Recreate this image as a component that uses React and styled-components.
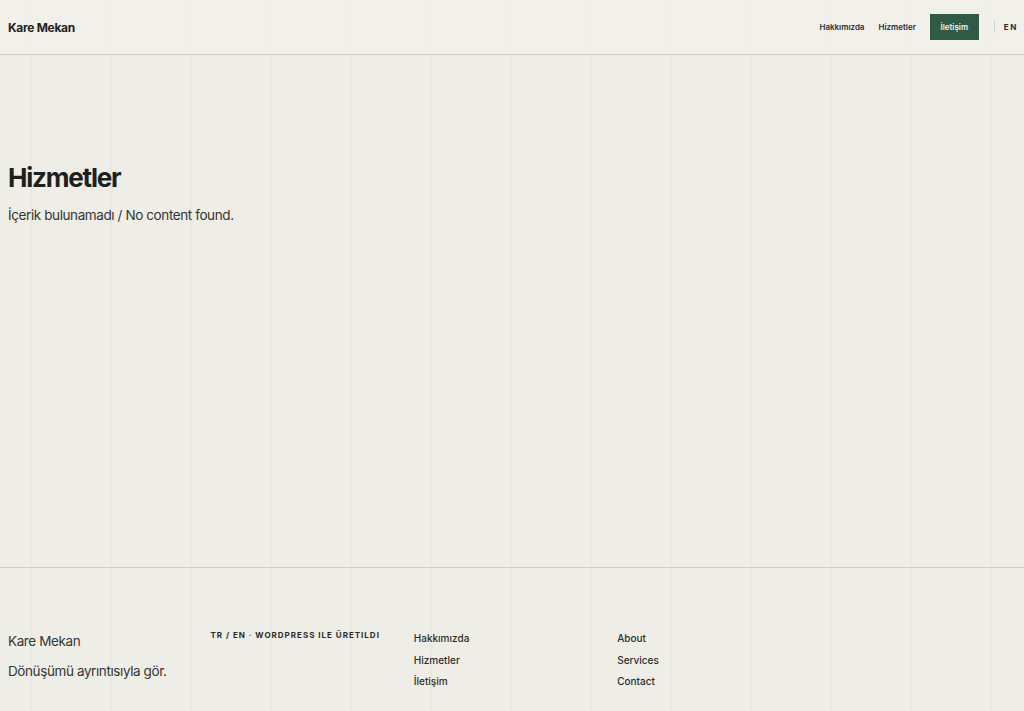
import React from 'react'
import styled, { createGlobalStyle } from 'styled-components'

const GlobalStyle = createGlobalStyle`
  * { box-sizing: border-box; }
  html, body { margin: 0; padding: 0; }
  body {
    background-color: #eeede6;
    background-image: linear-gradient(to right, rgba(60, 60, 40, 0.022) 2px, transparent 2px);
    background-size: 80px 100%;
    background-position: 30px 0;
    font-family: Inter, "Noto Sans", sans-serif;
    color: #2c2f2b;
  }
`

const Page = styled.div`
  display: flex;
  flex-direction: column;
  min-height: 711px;
`

const Header = styled.header`
  height: 55px;
  display: flex;
  align-items: center;
  justify-content: space-between;
  padding: 0 8px;
  background: rgba(244, 242, 237, 0.55);
  border-bottom: 1px solid #cfcec7;
`

const Brand = styled.div`
  font-size: 12px;
  font-weight: 700;
  letter-spacing: -0.3px;
  color: #1f221f;
`

const Nav = styled.nav`
  display: flex;
  align-items: center;
  gap: 14px;
`

const NavLink = styled.a`
  font-size: 8px;
  font-weight: 600;
  color: #2b2d2a;
  text-decoration: none;
`

const CtaButton = styled.a`
  display: flex;
  align-items: center;
  justify-content: center;
  width: 49px;
  height: 26px;
  background: #2f5a44;
  color: #f2f1eb;
  font-size: 8px;
  font-weight: 600;
  text-decoration: none;
`

const LangSwitch = styled.span`
  display: flex;
  align-items: center;
  height: 12px;
  margin-left: 1px;
  padding-left: 9px;
  border-left: 1px solid #d0cfc8;
  font-size: 8px;
  font-weight: 700;
  letter-spacing: 1.6px;
  margin-right: -2px;
  color: #2b2d2a;
`

const Main = styled.main`
  height: 512px;
  padding: 108px 8px 0;
`

const Title = styled.h1`
  margin: 0 0 14px;
  font-size: 26px;
  font-weight: 700;
  letter-spacing: -1.2px;
  line-height: 30px;
  color: #1c211d;
`

const Empty = styled.p`
  margin: 0;
  font-size: 13.5px;
  letter-spacing: -0.4px;
  color: #333532;
`

const Footer = styled.footer`
  border-top: 1px solid #cfcec7;
  padding: 61px 8px 24px;
  display: grid;
  grid-template-columns: repeat(5, 1fr);
  column-gap: 4px;
  align-items: start;
`

const FooterCol = styled.div`
  display: flex;
  flex-direction: column;
  gap: ${({ $gap }) => $gap || 0}px;
  padding-top: ${({ $top }) => $top || 0}px;
  padding-left: ${({ $left }) => $left || 0}px;
`

const FooterText = styled.p`
  margin: 0;
  font-size: 13.5px;
  line-height: 20px;
  letter-spacing: -0.4px;
  color: #353733;
`

const FooterLabel = styled.p`
  margin: 0;
  font-size: 8px;
  font-weight: 700;
  letter-spacing: 1px;
  line-height: 12px;
  text-transform: uppercase;
  color: #2b2d2a;
`

const FooterLink = styled.a`
  font-size: 10px;
  font-weight: 500;
  line-height: 14px;
  color: #2b2d2a;
  text-decoration: none;
`

export default function App() {
  return (
    <Page>
      <GlobalStyle />
      <Header>
        <Brand>Kare Mekan</Brand>
        <Nav>
          <NavLink href="#">Hakkımızda</NavLink>
          <NavLink href="#">Hizmetler</NavLink>
          <CtaButton href="#">İletişim</CtaButton>
          <LangSwitch>EN</LangSwitch>
        </Nav>
      </Header>
      <Main>
        <Title>Hizmetler</Title>
        <Empty>İçerik bulunamadı / No content found.</Empty>
      </Main>
      <Footer>
        <FooterCol $gap={10} $top={2}>
          <FooterText>Kare Mekan</FooterText>
          <FooterText>Dönüşümü ayrıntısıyla gör.</FooterText>
        </FooterCol>
        <FooterCol>
          <FooterLabel>TR / EN · WordPress ile üretildi</FooterLabel>
        </FooterCol>
        <FooterCol $gap={7.5} $top={2} $left={1}>
          <FooterLink href="#">Hakkımızda</FooterLink>
          <FooterLink href="#">Hizmetler</FooterLink>
          <FooterLink href="#">İletişim</FooterLink>
        </FooterCol>
        <FooterCol $gap={7.5} $top={2} $left={2}>
          <FooterLink href="#">About</FooterLink>
          <FooterLink href="#">Services</FooterLink>
          <FooterLink href="#">Contact</FooterLink>
        </FooterCol>
      </Footer>
    </Page>
  )
}
